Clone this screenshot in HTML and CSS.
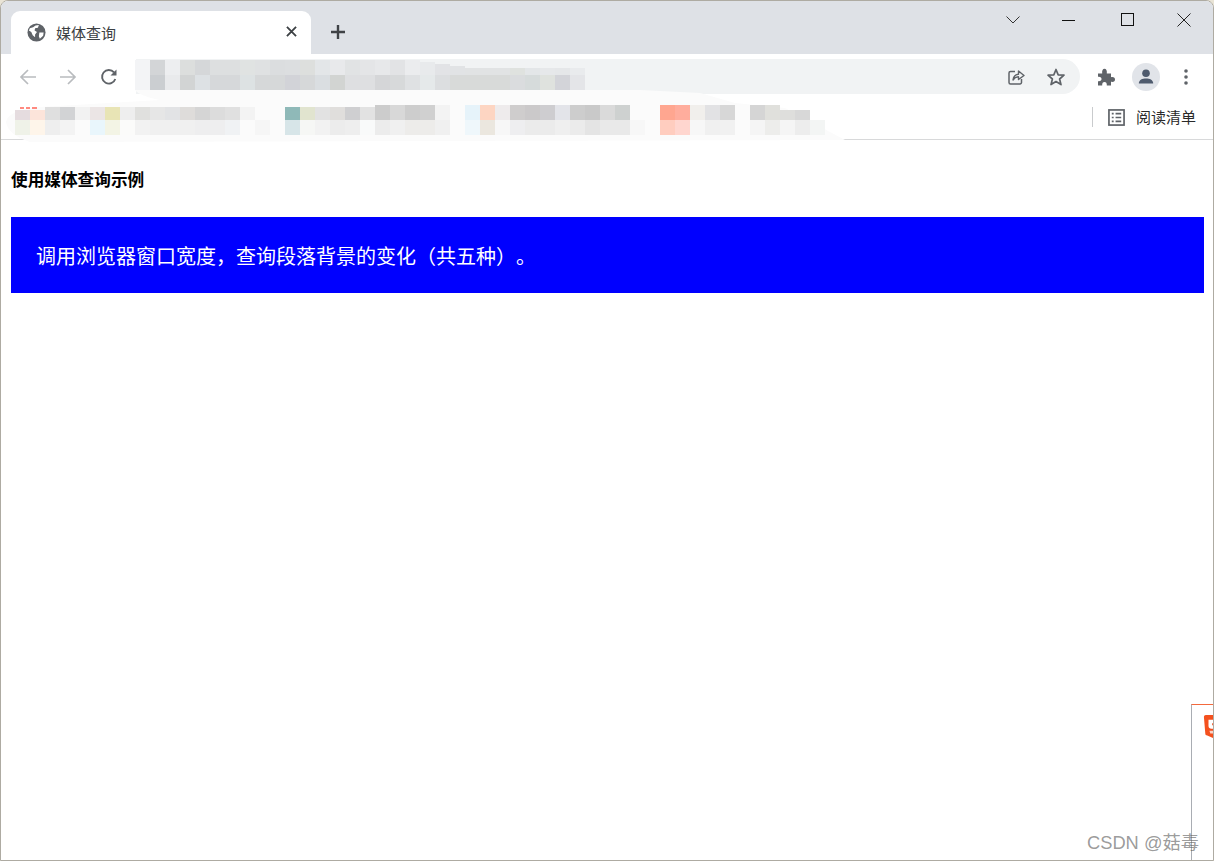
FILE: index.html
```html
<!DOCTYPE html>
<html lang="zh-CN">
<head>
<meta charset="utf-8">
<title>媒体查询</title>
<link rel="stylesheet" href="styles.css">
</head>
<body>
<div class="window">
  <header class="tabstrip">
    <div class="tab">
      <svg class="favicon" viewBox="0 0 20 20"><circle cx="10" cy="10" r="9.500" fill="#5f6368"/><path d="M3 5.500 6.500 4.500 9 2.500 12.500 2 11.500 5 8.500 5.500 8 8 10.500 9.500 8.500 12 8.500 15 6 13 4.500 9.500 2 8Z M13 10h4.500l-.5 3.500-3.500 3-1-2.500Z" fill="#fff"/></svg>
      <span class="tab-title">媒体查询</span>
      <svg class="tab-close" viewBox="0 0 12 12"><path d="M1 1 11 11M11 1 1 11" stroke="#3c4043" stroke-width="2" fill="none"/></svg>
    </div>
    <svg class="new-tab" viewBox="0 0 16 16"><path d="M8 1V15M1 8H15" stroke="#3f4246" stroke-width="2.400" fill="none"/></svg>
    <div class="win-controls">
      <svg class="win-btn chevron" viewBox="0 0 14 8"><path d="M.5.5 7 7 13.500.5" stroke="#333" fill="none"/></svg>
      <svg class="win-btn minimize" viewBox="0 0 14 14"><path d="M0 7.500H13" stroke="#111" fill="none"/></svg>
      <svg class="win-btn maximize" viewBox="0 0 14 14"><rect x=".5" y=".5" width="12" height="12" stroke="#111" fill="none"/></svg>
      <svg class="win-btn closer" viewBox="0 0 14 14"><path d="M.5.5 13.500 13.500M13.500.5 .5 13.500" stroke="#222" fill="none"/></svg>
    </div>
  </header>

  <nav class="toolbar">
    <svg class="nav-icon first" viewBox="0 0 18 18"><path d="M17 9H2M9 2 2 9l7 7" stroke="#b9bcbf" stroke-width="1.700" fill="none"/></svg>
    <svg class="nav-icon" viewBox="0 0 18 18"><path d="M1 9H16M9 2l7 7-7 7" stroke="#b9bcbf" stroke-width="1.700" fill="none"/></svg>
    <svg class="nav-icon reload" viewBox="0 0 18 18"><path d="M15.300 11A6.800 6.800 0 1 1 14 4.300" stroke="#5f6368" stroke-width="1.900" fill="none"/><path d="M16.500 1.500V7.500H10.500Z" fill="#5f6368"/></svg>
    <div class="omnibox">
      <svg class="omni-icon" viewBox="0 0 20 20"><path d="M9 4.500H4.500A1.500 1.500 0 0 0 3 6V15.500A1.500 1.500 0 0 0 4.500 17H14A1.500 1.500 0 0 0 15.500 15.500V12" stroke="#5f6368" stroke-width="1.500" fill="none"/><path d="M7 13C7.500 9.500 9.500 7.500 12.500 7.200V4L18 8.500 12.500 12.500V9.800C10.500 9.800 8.500 10.800 7 13Z" stroke="#5f6368" stroke-width="1.400" fill="none" stroke-linejoin="round"/></svg>
      <svg class="omni-icon star" viewBox="0 0 20 20"><path d="M10 2.500 12.200 7.800 18 8.200 13.600 12 15 17.600 10 14.600 5 17.600 6.400 12 2 8.200 7.800 7.800Z" stroke="#5f6368" stroke-width="1.700" fill="none" stroke-linejoin="round"/></svg>
    </div>
    <svg class="puzzle" viewBox="0 0 20 20"><path d="M2 6.500H6.200C5.800 3.500 6.800 1.800 8.500 1.800S11.200 3.500 10.800 6.500H15V10.200C18 9.800 19 10.800 19 12.500S18 15.200 15 14.800V18.500H10.800C11 16 10 15 8.500 15S6 16 6.200 18.500H2V14.200C4.500 14.500 5.500 13.500 5.500 12S4.500 9.500 2 9.800Z" fill="#5f6368"/></svg>
    <div class="avatar"><svg viewBox="0 0 20 20"><circle cx="10" cy="6.300" r="3.800" fill="#4f5b6e"/><path d="M2.800 16.500C2.800 12.800 6.500 11.500 10 11.500S17.200 12.800 17.200 16.500Z" fill="#4f5b6e"/></svg></div>
    <svg class="menu-dots" viewBox="0 0 4 16"><circle cx="2" cy="2" r="1.800" fill="#5f6368"/><circle cx="2" cy="8" r="1.800" fill="#5f6368"/><circle cx="2" cy="14" r="1.800" fill="#5f6368"/></svg>
  </nav>

  <div class="bookmarks">
    <div class="reading-list">
      <svg class="list-icon" viewBox="0 0 18 18"><rect x="1" y="1" width="16" height="16" stroke="#5f6368" stroke-width="1.800" fill="none"/><path d="M4 5H6M8 5H14M4 9H6M8 9H14M4 13H6M8 13H14" stroke="#5f6368" stroke-width="1.800" fill="none"/></svg>
      <span>阅读清单</span>
    </div>
  </div>

  <main class="page">
    <h4 class="page-title">使用媒体查询示例</h4>
    <p class="banner">调用浏览器窗口宽度&#xFF0C;查询段落背景的变化&#xFF08;共五种&#xFF09;。</p>
  </main>

  <svg class="mosaic" width="860" height="85" viewBox="0 60 860 85" aria-hidden="true">
    <path d="M420 90H640L700 93 735 103 785 108 845 140 30 142Q8 135 6 122 8 110 40 107L160 100Q140 96 135 90Z" fill="#fbfbfb"/>
    <g id="addr1">
      <rect x="135" y="60" width="15" height="15" fill="#f3f4f6"/><rect x="150" y="60" width="15" height="15" fill="#d3d5d7"/><rect x="165" y="60" width="15" height="15" fill="#edeef0"/><rect x="180" y="60" width="15" height="15" fill="#dcdedd"/><rect x="195" y="60" width="15" height="15" fill="#d5d7d9"/><rect x="210" y="60" width="30" height="15" fill="#dddfe0"/><rect x="240" y="60" width="15" height="15" fill="#e0e3e2"/><rect x="255" y="60" width="15" height="15" fill="#dfe1e2"/><rect x="270" y="60" width="15" height="15" fill="#dbdddf"/><rect x="285" y="60" width="15" height="15" fill="#dcdee0"/><rect x="300" y="60" width="15" height="15" fill="#dddfdd"/><rect x="315" y="60" width="15" height="15" fill="#e3e6e8"/><rect x="330" y="60" width="15" height="15" fill="#e8e9eb"/><rect x="345" y="60" width="15" height="15" fill="#e1e3e4"/><rect x="360" y="60" width="15" height="15" fill="#e4e5e7"/><rect x="375" y="60" width="15" height="15" fill="#e7e8ea"/><rect x="390" y="60" width="15" height="15" fill="#e2e3e5"/><rect x="405" y="60" width="15" height="15" fill="#ebecee"/><rect x="420" y="62" width="15" height="13" fill="#e8eaec"/><rect x="435" y="64" width="15" height="11" fill="#e2e3e6"/><rect x="450" y="66" width="15" height="9" fill="#e1e3e5"/><rect x="465" y="68" width="45" height="7" fill="#e1e3e4"/><rect x="510" y="68" width="15" height="7" fill="#dfe2df"/><rect x="525" y="68" width="15" height="7" fill="#e3e6e8"/><rect x="540" y="68" width="15" height="7" fill="#e6e8ea"/><rect x="555" y="68" width="15" height="7" fill="#e5e7e9"/><rect x="570" y="68" width="15" height="7" fill="#e9ebed"/>
    </g>
    <g id="addr2">
      <rect x="135" y="75" width="15" height="15" fill="#f3f4f6"/><rect x="150" y="75" width="15" height="15" fill="#cbced1"/><rect x="165" y="75" width="15" height="15" fill="#e9eaec"/><rect x="180" y="75" width="15" height="15" fill="#d2d4d4"/><rect x="195" y="75" width="15" height="15" fill="#dde1e4"/><rect x="210" y="75" width="30" height="15" fill="#d6d8da"/><rect x="240" y="75" width="15" height="15" fill="#dde2e3"/><rect x="255" y="75" width="30" height="15" fill="#d6d8d9"/><rect x="285" y="75" width="15" height="15" fill="#d2d3d8"/><rect x="300" y="75" width="15" height="15" fill="#d6d8d9"/><rect x="315" y="75" width="15" height="15" fill="#dadee1"/><rect x="330" y="75" width="15" height="15" fill="#d2d4d2"/><rect x="345" y="75" width="30" height="15" fill="#dedfe1"/><rect x="375" y="75" width="15" height="15" fill="#d5d6d8"/><rect x="390" y="75" width="15" height="15" fill="#d7d9da"/><rect x="405" y="75" width="15" height="15" fill="#dfe1e3"/><rect x="420" y="75" width="15" height="15" fill="#e5e9ea"/><rect x="435" y="75" width="15" height="15" fill="#dcdee0"/><rect x="450" y="75" width="60" height="15" fill="#d8dad9"/><rect x="510" y="75" width="15" height="15" fill="#dadcde"/><rect x="525" y="75" width="15" height="15" fill="#d6dbdb"/><rect x="540" y="75" width="15" height="15" fill="#dfe2de"/><rect x="555" y="75" width="15" height="15" fill="#d3d4d9"/><rect x="570" y="75" width="15" height="15" fill="#e4e5e8"/>
    </g>
    <g id="mark1">
      <rect x="20" y="107" width="4" height="2" fill="#ff8a80"/><rect x="26" y="107" width="4" height="2" fill="#ff8a80"/><rect x="32" y="107" width="5" height="2" fill="#ff8a80"/>
      <rect x="15" y="110" width="15" height="10" fill="#e5dcdf"/><rect x="30" y="110" width="15" height="10" fill="#fce4da"/><rect x="45" y="107" width="15" height="13" fill="#dfdfdf"/><rect x="60" y="107" width="15" height="13" fill="#d2d3d5"/><rect x="75" y="107" width="15" height="13" fill="#f2f2f2"/><rect x="90" y="107" width="15" height="13" fill="#ebe5e5"/><rect x="105" y="107" width="15" height="13" fill="#e8e4b5"/><rect x="120" y="107" width="15" height="13" fill="#eeeeee"/><rect x="135" y="107" width="15" height="13" fill="#e0e0de"/><rect x="150" y="107" width="15" height="13" fill="#e6e6e6"/><rect x="165" y="107" width="15" height="13" fill="#e2e3e5"/><rect x="180" y="107" width="15" height="13" fill="#dedcda"/><rect x="195" y="107" width="15" height="13" fill="#d5d5d5"/><rect x="210" y="107" width="15" height="13" fill="#dcdcdc"/><rect x="225" y="107" width="15" height="13" fill="#e0e0e0"/><rect x="240" y="107" width="15" height="13" fill="#f3f3f3"/>
      <rect x="285" y="107" width="15" height="13" fill="#8fb9b8"/><rect x="300" y="107" width="15" height="13" fill="#e1e4cf"/><rect x="315" y="107" width="15" height="13" fill="#e2e2e2"/><rect x="330" y="107" width="15" height="13" fill="#e0dedc"/><rect x="345" y="107" width="15" height="13" fill="#cfcfd1"/><rect x="360" y="107" width="15" height="13" fill="#e2e2e2"/><rect x="375" y="105" width="15" height="15" fill="#cccccc"/><rect x="390" y="105" width="15" height="15" fill="#d8d8d8"/><rect x="405" y="105" width="15" height="15" fill="#cdcdcd"/><rect x="420" y="105" width="15" height="15" fill="#d0d0d0"/><rect x="435" y="105" width="15" height="15" fill="#f3f3f3"/>
      <rect x="465" y="105" width="15" height="15" fill="#e6f3fa"/><rect x="480" y="105" width="15" height="15" fill="#fdd5c2"/><rect x="495" y="105" width="15" height="15" fill="#eeebec"/><rect x="510" y="105" width="15" height="15" fill="#cfcdcd"/><rect x="525" y="105" width="15" height="15" fill="#cbc9ca"/><rect x="540" y="105" width="15" height="15" fill="#cecdd0"/><rect x="555" y="105" width="15" height="15" fill="#e3e4e9"/><rect x="570" y="105" width="15" height="15" fill="#cdcdcd"/><rect x="585" y="105" width="15" height="15" fill="#c9c9c9"/><rect x="600" y="105" width="15" height="15" fill="#dadada"/><rect x="615" y="105" width="15" height="15" fill="#ced1d0"/>
      <rect x="660" y="105" width="15" height="15" fill="#ffa690"/><rect x="675" y="105" width="15" height="15" fill="#ffad9d"/><rect x="690" y="105" width="15" height="15" fill="#f1efec"/><rect x="705" y="105" width="15" height="15" fill="#e2e2e4"/><rect x="720" y="105" width="15" height="15" fill="#d7d7d7"/><rect x="750" y="105" width="15" height="15" fill="#d5d5d5"/><rect x="765" y="105" width="15" height="15" fill="#e0e0dc"/><rect x="780" y="110" width="15" height="10" fill="#dededc"/><rect x="795" y="110" width="15" height="10" fill="#d8d8d8"/>
    </g>
    <g id="mark2">
      <rect x="15" y="120" width="15" height="15" fill="#eff2e8"/><rect x="30" y="120" width="15" height="15" fill="#fef5ea"/><rect x="45" y="120" width="15" height="15" fill="#eeeeee"/><rect x="60" y="120" width="15" height="15" fill="#f3f3f3"/><rect x="75" y="120" width="15" height="15" fill="#fbfbfb"/><rect x="90" y="120" width="15" height="15" fill="#e9f6fc"/><rect x="105" y="120" width="15" height="15" fill="#f3f4e5"/><rect x="120" y="120" width="15" height="15" fill="#fbfbfa"/><rect x="135" y="120" width="15" height="15" fill="#f2f2f2"/><rect x="150" y="120" width="30" height="15" fill="#f0f0f0"/><rect x="180" y="120" width="15" height="15" fill="#f0f0f0"/><rect x="195" y="120" width="30" height="15" fill="#eeeeef"/><rect x="225" y="120" width="15" height="15" fill="#f0f2f4"/><rect x="240" y="120" width="15" height="15" fill="#fbfbfb"/><rect x="255" y="120" width="15" height="15" fill="#f6f6f6"/>
      <rect x="285" y="120" width="15" height="15" fill="#d7e5e8"/><rect x="300" y="120" width="15" height="15" fill="#f6f7f5"/><rect x="315" y="120" width="15" height="15" fill="#f2f2f2"/><rect x="330" y="120" width="15" height="15" fill="#ececec"/><rect x="345" y="120" width="15" height="15" fill="#eeeeee"/><rect x="360" y="120" width="15" height="15" fill="#f9fafa"/><rect x="375" y="120" width="15" height="15" fill="#ececec"/><rect x="390" y="120" width="15" height="15" fill="#f0f0f0"/><rect x="405" y="120" width="30" height="15" fill="#edecea"/><rect x="435" y="120" width="15" height="15" fill="#f0f0f0"/>
      <rect x="465" y="120" width="15" height="15" fill="#eff7fb"/><rect x="480" y="120" width="15" height="15" fill="#ebe7df"/><rect x="495" y="120" width="15" height="15" fill="#f7f7f7"/><rect x="510" y="120" width="15" height="15" fill="#eeeef0"/><rect x="525" y="120" width="30" height="15" fill="#ebebeb"/><rect x="555" y="120" width="15" height="15" fill="#efefef"/><rect x="570" y="120" width="15" height="15" fill="#ebebeb"/><rect x="585" y="120" width="15" height="15" fill="#e4e4e4"/><rect x="600" y="120" width="30" height="15" fill="#e9e9e9"/><rect x="630" y="120" width="15" height="15" fill="#f7f7f7"/>
      <rect x="660" y="120" width="15" height="15" fill="#ffcdbf"/><rect x="675" y="120" width="15" height="15" fill="#ffd6cf"/><rect x="690" y="120" width="15" height="15" fill="#f7f7f7"/><rect x="705" y="120" width="15" height="15" fill="#f0f0f0"/><rect x="720" y="120" width="15" height="15" fill="#f1f1f1"/><rect x="750" y="120" width="15" height="15" fill="#f5f5f5"/><rect x="765" y="120" width="15" height="15" fill="#ededeb"/><rect x="780" y="120" width="15" height="15" fill="#f5f5f5"/><rect x="795" y="120" width="15" height="15" fill="#ededed"/><rect x="810" y="120" width="15" height="15" fill="#f3f5f4"/>
    </g>
  </svg>

  <aside class="side-widget">
    <svg class="html5" viewBox="0 0 24 28"><path d="M3 1H23V23L13 27 4 23C3 23 2.500 22 2.500 21L1 3C1 2 2 1 3 1Z" fill="#f4511e"/><path d="M6 6H24V10H10V12H24V16H9C7.500 16 6 15 6 13Z" fill="#fff"/><path d="M7 18H24V21H8Z" fill="#fff" opacity=".75"/></svg>
  </aside>
  <div class="watermark">CSDN @菇毒</div>
</div>
</body>
</html>
```

FILE: styles.css
```css
* { box-sizing: border-box; }
html, body { margin: 0; height: 100%; background: #e9e4d6; overflow: hidden; }
body { font-family: "Noto Sans CJK SC", "Liberation Sans", sans-serif; }

.window {
  position: relative;
  width: 1214px;
  height: 861px;
  display: flex;
  flex-direction: column;
  background: #fff;
  border: 1px solid #aeaba2;
  border-radius: 8px 8px 0 0;
  overflow: hidden;
}

.tabstrip {
  height: 53px;
  flex: none;
  display: flex;
  align-items: flex-start;
  padding: 10px 0 0 10px;
  background: #dee1e6;
}
.tab {
  width: 300px;
  height: 43px;
  display: flex;
  align-items: center;
  padding: 0 14px 0 16px;
  background: #fff;
  border-radius: 9px 9px 0 0;
}
.favicon { width: 19px; height: 19px; flex: none; }
.tab-title { margin-left: 10px; font-size: 15px; color: #3c4043; line-height: 20px; }
.tab-close { width: 11px; height: 11px; margin-left: auto; margin-bottom: 2px; }
.new-tab { width: 16px; height: 16px; margin: 13px 0 0 19px; }

.win-controls { margin-left: auto; display: flex; align-items: center; padding: 2px 22px 0 0; height: 14px; margin-top: 1px; }
.win-btn { display: block; }
.chevron { width: 14px; height: 8px; margin-right: 42px; }
.minimize { width: 14px; height: 14px; margin-right: 45px; }
.maximize { width: 14px; height: 14px; margin-right: 42px; }
.closer { width: 14px; height: 14px; }

.toolbar {
  height: 46px;
  flex: none;
  display: flex;
  align-items: center;
  background: #fff;
}
.nav-icon { width: 18px; height: 18px; margin-right: 22px; flex: none; margin-bottom: 1px; }
.nav-icon.first { margin-left: 18px; }
.nav-icon.reload { margin-left: 1px; margin-right: 21px; width: 18px; }
.omnibox {
  width: 944px;
  height: 35px;
  margin-left: -3px;
  flex: none;
  margin-bottom: 1px;
  display: flex;
  align-items: center;
  justify-content: flex-end;
  gap: 20px;
  padding-right: 14px;
  background: #f1f3f4;
  border-radius: 0 18px 18px 0;
}
.omni-icon { width: 20px; height: 20px; }
.puzzle { width: 20px; height: 20px; margin-left: 16px; flex: none; margin-bottom: 1px; }
.avatar {
  width: 28px;
  height: 28px;
  margin-left: 16px;
  flex: none;
  margin-bottom: 1px;
  display: flex;
  align-items: center;
  justify-content: center;
  border-radius: 50%;
  background: #e1e4e9;
}
.avatar svg { width: 20px; height: 20px; }
.menu-dots { width: 4px; height: 16px; margin-left: 24px; flex: none; margin-bottom: 1px; }

.bookmarks {
  height: 40px;
  flex: none;
  display: flex;
  justify-content: flex-end;
  align-items: center;
  background: #fff;
  border-bottom: 1px solid #d8d9da;
}
.reading-list {
  display: flex;
  align-items: center;
  height: 20px;
  padding-right: 17px;
  border-left: 1px solid #c9cbcd;
  margin-bottom: 5px;
}
.list-icon { width: 17px; height: 17px; margin-left: 15px; }
.reading-list span { margin-left: 11px; font-size: 15px; color: #2a2a2a; line-height: 20px; }

.page { flex: 1; padding: 28px 9px 0 10px; }
.page-title {
  margin: 0;
  font-size: 16.670px;
  line-height: 22px;
  font-weight: 700;
  color: #000;
}
.banner {
  margin: 27px 0 0;
  height: 76px;
  padding: 0 25px;
  display: flex;
  align-items: center;
  font-size: 20px;
  color: #fff;
  background: #00f;
  text-spacing-trim: space-all;
  font-feature-settings: "halt" 0, "palt" 0, "chws" 0;
}

.mosaic { position: absolute; left: -1px; top: 59px; pointer-events: none; }

.side-widget {
  position: absolute;
  left: 1190px;
  top: 703px;
  width: 40px;
  height: 160px;
  background: #fff;
  border-left: 1px solid #a9adb3;
  border-top: 1px solid #f4693c;
}
.html5 { position: absolute; left: 11px; top: 9px; width: 22px; height: 26px; }

.watermark {
  position: absolute;
  left: 1086px;
  top: 829px;
  font-family: "Liberation Sans", "Noto Sans CJK SC", sans-serif;
  font-size: 18.300px;
  line-height: 26px;
  color: rgba(90, 90, 90, 0.62);
  white-space: nowrap;
}
```
